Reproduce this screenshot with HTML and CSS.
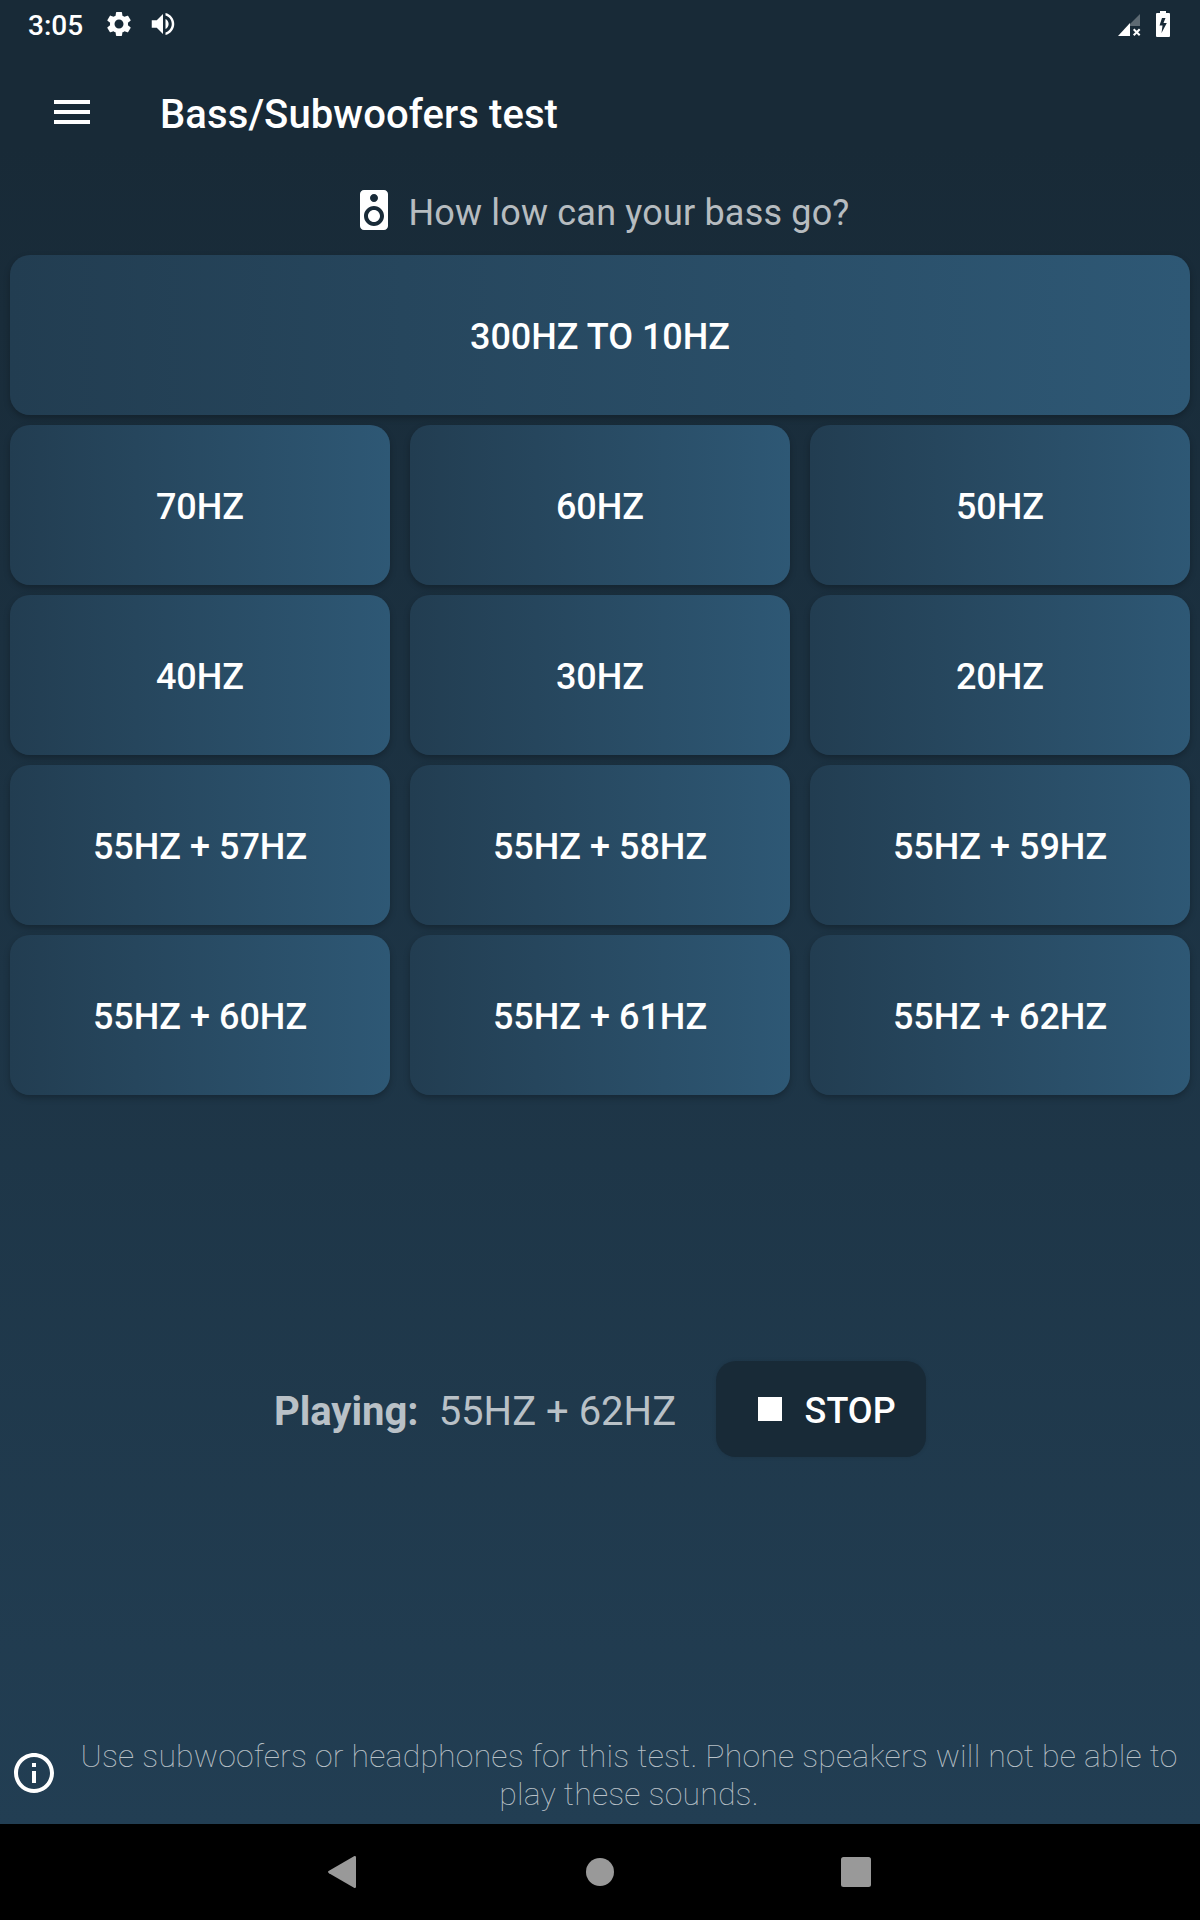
FILE: index.html
```html
<!DOCTYPE html>
<html lang="en">
<head>
    <meta charset="UTF-8">
    <meta name="viewport" content="width=device-width, initial-scale=1.0">
    <title>Bass/Subwoofers test</title>
    <link rel="stylesheet" href="styles.css">
</head>
<body>
    <div class="app">
        <!-- Status bar -->
        <div class="status-bar">
            <span class="clock">3:05</span>
            <svg class="status-gear" viewBox="0 0 24 24"><path fill="#fff" d="M19.14 12.94c.04-.3.06-.61.06-.94 0-.32-.02-.64-.07-.94l2.03-1.58c.18-.14.23-.41.12-.61l-1.92-3.32c-.12-.22-.37-.29-.59-.22l-2.39.96c-.5-.38-1.03-.7-1.62-.94l-.36-2.54c-.04-.24-.24-.41-.48-.41h-3.84c-.24 0-.43.17-.47.41l-.36 2.54c-.59.24-1.13.57-1.62.94l-2.39-.96c-.22-.08-.47 0-.59.22L2.74 8.87c-.12.21-.08.47.12.61l2.03 1.58c-.05.3-.09.63-.09.94s.02.64.07.94l-2.03 1.58c-.18.14-.23.41-.12.61l1.92 3.32c.12.22.37.29.59.22l2.39-.96c.5.38 1.03.7 1.62.94l.36 2.54c.05.24.24.41.48.41h3.84c.24 0 .44-.17.47-.41l.36-2.54c.59-.24 1.13-.56 1.62-.94l2.39.96c.22.08.47 0 .59-.22l1.92-3.32c.12-.22.07-.47-.12-.61l-2.01-1.58zM12 15.6c-1.98 0-3.6-1.62-3.6-3.6s1.62-3.6 3.6-3.6 3.6 1.62 3.6 3.6-1.62 3.6-3.6 3.6z"/></svg>
            <svg class="status-volume" viewBox="0 0 24 24"><path fill="#fff" d="M3 9v6h4l5 5V4L7 9H3zm13.5 3c0-1.77-1.02-3.29-2.5-4.03v8.05c1.48-.73 2.5-2.25 2.5-4.02zM14 3.23v2.06c2.89.86 5 3.54 5 6.71s-2.11 5.85-5 6.71v2.06c4.01-.91 7-4.49 7-8.77s-2.99-7.86-7-8.77z"/></svg>
            <span class="spacer"></span>
            <svg class="status-signal" viewBox="0 0 24 24">
                <path fill="#fff" fill-opacity=".3" d="M23 1v12H13V11z"/>
                <path fill="#fff" d="M13 10v13H1z"/>
                <path stroke="#fff" stroke-width="2" d="M16.7 16.2l6 6M22.7 16.2l-6 6"/>
            </svg>
            <svg class="status-battery" viewBox="0 0 14 26"><path fill="#fff" fill-rule="evenodd" d="M4 0h6v2h3q1 0 1 1v22q0 1-1 1H1q-1 0-1-1V3q0-1 1-1h3zM6 7L3.500 14.500H6.500L5.500 22L10.800 12H7.500L9.500 7z"/></svg>
        </div>

        <!-- Toolbar -->
        <header class="toolbar">
            <svg class="menu-icon" viewBox="0 0 36 24"><path fill="#fff" d="M0 0h36v4H0zM0 10h36v4H0zM0 20h36v4H0z"/></svg>
            <h1 class="title">Bass/Subwoofers test</h1>
        </header>

        <div class="question">
            <svg class="icon" viewBox="0 0 24 24"><path fill="#fff" d="M17 2H7c-1.100 0-2 .9-2 2v16c0 1.100.9 2 2 2h10c1.100 0 2-.9 2-2V4c0-1.100-.9-2-2-2zm-5 2c1.100 0 2 .9 2 2s-.9 2-2 2-2-.9-2-2 .89-2 2-2zm0 16c-2.760 0-5-2.240-5-5s2.240-5 5-5 5 2.240 5 5-2.240 5-5 5zm0-8c-1.660 0-3 1.340-3 3s1.340 3 3 3 3-1.340 3-3-1.340-3-3-3z"/></svg>
            <span class="question-text">How low can your bass go?</span>
        </div>

        <!-- Test tones -->
        <div class="tones">
            <button class="tone tone-wide">300HZ TO 10HZ</button>
            <button class="tone">70HZ</button>
            <button class="tone">60HZ</button>
            <button class="tone">50HZ</button>
            <button class="tone">40HZ</button>
            <button class="tone">30HZ</button>
            <button class="tone">20HZ</button>
            <button class="tone">55HZ + 57HZ</button>
            <button class="tone">55HZ + 58HZ</button>
            <button class="tone">55HZ + 59HZ</button>
            <button class="tone">55HZ + 60HZ</button>
            <button class="tone">55HZ + 61HZ</button>
            <button class="tone">55HZ + 62HZ</button>
        </div>

        <!-- Playback -->
        <div class="player">
            <span class="playing-label">Playing:</span>
            <span class="playing-value">55HZ + 62HZ</span>
            <button class="stop">
                <span class="stop-icon"></span>
                <span class="stop-text">STOP</span>
            </button>
        </div>

        <footer class="hint">
            <svg class="icon" viewBox="0 0 24 24"><path fill="#fff" d="M11 7h2v2h-2zm0 4h2v6h-2zm1-9C6.480 2 2 6.480 2 12s4.480 10 10 10 10-4.480 10-10S17.520 2 12 2zm0 18c-4.410 0-8-3.590-8-8s3.590-8 8-8 8 3.590 8 8-3.590 8-8 8z"/></svg>
            <p class="hint-text">Use subwoofers or headphones for this test. Phone speakers will not be able to play these sounds.</p>
        </footer>
    </div>

    <!-- System navigation -->
    <nav class="nav-bar">
        <svg class="nav-icon" viewBox="0 0 32 32"><path fill="#999" d="M1 14.800L26 .2Q28 -.6 28 1.500V30.500Q28 32.600 26 31.800L1 17.200Q-1 16 1 14.800z"/></svg>
        <svg class="nav-icon" viewBox="0 0 32 32"><circle cx="16" cy="16" r="14" fill="#999"/></svg>
        <svg class="nav-icon" viewBox="0 0 32 32"><rect x="1" y="1" width="30" height="30" rx="2.500" fill="#999"/></svg>
    </nav>
</body>
</html>
```
FILE: styles.css
```css
* {
    box-sizing: border-box;
}
body {
    margin: 0;
    height: 1920px;
    display: flex;
    flex-direction: column;
    background: #000;
    color: #fff;
    font-family: Roboto, sans-serif;
}
svg {
    display: block;
    flex: none;
}
button {
    border: none;
    padding: 0;
    color: #fff;
    font-family: inherit;
    font-size: 36px;
    font-weight: 500;
    cursor: pointer;
}
.app {
    height: 1824px;
    display: flex;
    flex-direction: column;
    background: linear-gradient(#182a37 0%, #182a37 8%, #223e53 100%);
}

/* status bar */
.status-bar {
    height: 48px;
    padding: 0 30px 0 28px;
    display: flex;
    align-items: center;
}
.clock {
    width: 76px;
    font-size: 28px;
    font-weight: 500;
    line-height: 32px;
    padding-top: 4px;
}
.status-gear {
    width: 30px;
    height: 30px;
}
.status-volume {
    width: 30px;
    height: 30px;
    margin-left: 14px;
}
.spacer {
    flex: 1;
}
.status-signal {
    width: 24px;
    height: 24px;
    margin: 2px 15px 0 0;
}
.status-battery {
    width: 14px;
    height: 26px;
}

/* toolbar */
.toolbar {
    height: 128px;
    padding-left: 54px;
    display: flex;
    align-items: center;
}
.menu-icon {
    width: 36px;
    height: 24px;
}
.title {
    margin: 6px 0 0 70px;
    font-size: 40px;
    font-weight: 500;
    line-height: 48px;
    letter-spacing: 0.1px;
}

.question {
    height: 79px;
    padding-bottom: 11px;
    display: flex;
    align-items: center;
    justify-content: center;
    gap: 10px;
}
.icon {
    width: 48px;
    height: 48px;
}
.question-text {
    padding-top: 6px;
    font-size: 36px;
    letter-spacing: 0.18px;
    color: rgba(255, 255, 255, 0.7);
}

/* tone buttons */
.tones {
    display: grid;
    grid-template-columns: repeat(3, 1fr);
    grid-auto-rows: 160px;
    gap: 10px 20px;
    padding: 0 10px;
}
.tone {
    padding-top: 4px;
    border-radius: 20px;
    background: linear-gradient(to right, #223d51, #2e5875);
    box-shadow: 0 3px 6px rgba(0, 0, 0, 0.25);
}
.tone-wide {
    grid-column: 1 / -1;
}

/* playback row */
.player {
    flex: 1;
    display: flex;
    align-items: center;
    justify-content: center;
    font-size: 40px;
    color: rgba(255, 255, 255, 0.7);
}
.playing-label {
    margin-right: 20px;
    padding-top: 5px;
    font-weight: 700;
}
.playing-value {
    margin-right: 40px;
    padding-top: 5px;
}
.stop {
    width: 210px;
    height: 96px;
    padding-left: 11px;
    display: flex;
    align-items: center;
    justify-content: center;
    gap: 23px;
    border-radius: 20px;
    background: #182a37;
    box-shadow: 0 0 4px rgba(0, 0, 0, 0.12);
}
.stop-icon {
    width: 24px;
    height: 24px;
    background: #fff;
}
.stop-text {
    padding-top: 4px;
}

/* hint */
.hint {
    height: 102px;
    padding: 0 10px;
    display: flex;
    align-items: center;
}
.hint-text {
    flex: 1;
    margin: 0 0 0 10px;
    padding-top: 4px;
    font-size: 32px;
    font-weight: 100;
    line-height: 38px;
    letter-spacing: 0.2px;
    text-align: center;
    color: rgba(255, 255, 255, 0.7);
}

/* navigation */
.nav-bar {
    height: 96px;
    display: flex;
    align-items: center;
    justify-content: center;
    gap: 224px;
}
.nav-icon {
    width: 32px;
    height: 32px;
}
```
